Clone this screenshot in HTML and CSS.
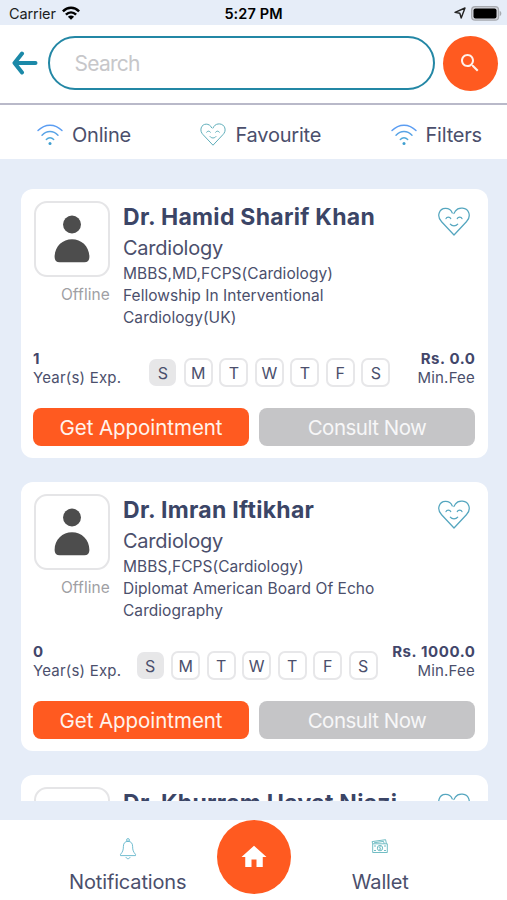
FILE: index.html
```
<!DOCTYPE html>
<html lang="en">
<head>
<meta charset="utf-8">
<title>Doctors</title>
<link rel="stylesheet" href="styles.css">
</head>
<body>
<svg class="defs" aria-hidden="true">
  <symbol id="wifi" viewBox="0 0 26 22">
    <g fill="none" stroke-width="1.4" stroke-linecap="round">
      <path stroke="#5b9df2" d="M1 6.6C8-.6 18-.6 25 6.6"/>
      <path stroke="#57a3e6" d="M5 11.2c4.700-4.900 11.300-4.900 16 0"/>
      <path stroke="#4fa9dc" d="M9.300 15.500c2.200-2.300 5.200-2.300 7.400 0"/>
    </g>
    <circle cx="13" cy="19.500" r="1.500" fill="#3f9fd0"/>
  </symbol>
  <symbol id="heart" viewBox="0 0 32 29">
    <g fill="none" stroke="currentColor" stroke-width="1.250" stroke-linecap="round" stroke-linejoin="round">
      <path d="M14.300 5.900C11.800-.2 3-.1 1.100 6.200c-1 3.500.2 6.300 2.500 8.600L16 28l12.400-13.200c2.300-2.300 3.500-5.100 2.500-8.600C29-.1 20.200-.2 17.300 4.200L15.900 6.500"/>
      <path d="M8 11.600c.7-1.900 3.900-1.900 4.700 0M19.300 11.600c.8-1.900 4-1.900 4.700 0M12.300 17.200c1.800 2.300 5.600 2.300 7.400 0"/>
    </g>
  </symbol>
  <symbol id="person" viewBox="0 0 36 48">
    <circle cx="18" cy="9.500" r="9" fill="#4d4d4d"/>
    <path fill="#4d4d4d" d="M.6 42C.6 31.500 8.500 24.300 18 24.300S35.400 31.500 35.400 42c0 3.500-1.800 5.300-5 5.300H5.600c-3.200 0-5-1.800-5-5.300z"/>
  </symbol>
</svg>

<div class="app">
  <div class="status">
    <div class="carrier">Carrier
      <svg width="18" height="14" viewBox="0 0 18 14"><g fill="none" stroke="#000" stroke-width="2.500"><path d="M.9 5.300c4.700-4.700 11.500-4.700 16.200 0"/><path d="M3.900 8.600c3-2.900 7.200-2.900 10.200 0"/></g><path d="M5.900 10.700c1.800-1.700 4.400-1.700 6.200 0L9 13.800z"/></svg>
    </div>
    <div class="time">5:27 PM</div>
    <div class="power">
      <svg width="12" height="12" viewBox="0 0 12 12"><path fill="none" stroke="#222" stroke-width="1.400" stroke-linejoin="round" d="M11 1 7.200 11 5.800 6.200 1 5.400z"/></svg>
      <svg width="31" height="15" viewBox="0 0 31 15"><rect x=".6" y=".7" width="27" height="13.500" rx="3.500" fill="#d0d3da" stroke="#a7aab0" stroke-width="1.200"/><rect x="2.500" y="2.500" width="23" height="10" rx="2" fill="#000"/><path fill="#a7aab0" d="M28.700 5c2.200.6 2.200 4.400 0 5z"/></svg>
    </div>
  </div>

  <div class="search">
    <svg class="back" width="26" height="24" viewBox="0 0 26 24"><path fill="none" stroke="#1b89a8" stroke-width="4" stroke-linecap="round" stroke-linejoin="round" d="M10 2.500 2.500 12l7.500 9.500M3 12h20.500"/></svg>
    <div class="field">Search</div>
    <div class="go"><svg width="24" height="24" viewBox="0 0 24 24"><path fill="#fff1ea" d="M15.500 14h-.79l-.28-.27C15.410 12.590 16 11.110 16 9.500 16 5.910 13.090 3 9.500 3S3 5.910 3 9.500 5.910 16 9.500 16c1.610 0 3.090-.59 4.230-1.570l.27.28v.79l5 4.990L20.490 19l-4.990-5zm-6 0C7.010 14 5 11.990 5 9.500S7.010 5 9.500 5 14 7.010 14 9.500 11.990 14 9.500 14z"/></svg></div>
  </div>

  <div class="tabs">
    <div class="tab"><svg class="wifi"><use href="#wifi"/></svg><span>Online</span></div>
    <div class="tab"><svg class="heart-sm"><use href="#heart"/></svg><span>Favourite</span></div>
    <div class="tab"><svg class="wifi"><use href="#wifi"/></svg><span>Filters</span></div>
  </div>

  <div class="list">
    <div class="card">
      <div class="top">
        <div class="photo"><div class="avatar"><svg width="36" height="48"><use href="#person"/></svg></div><span class="offline">Offline</span></div>
        <div class="info">
          <div class="name">Dr. Hamid Sharif Khan</div>
          <div class="spec">Cardiology</div>
          <div class="deg">MBBS,MD,FCPS(Cardiology)<br>Fellowship In Interventional<br>Cardiology(UK)</div>
        </div>
        <svg class="heart"><use href="#heart"/></svg>
      </div>
      <div class="stats">
        <div class="stat"><b>1</b><span>Year(s) Exp.</span></div>
        <div class="days"><i class="on">S</i><i>M</i><i>T</i><i>W</i><i>T</i><i>F</i><i>S</i></div>
        <div class="stat right"><b>Rs. 0.0</b><span>Min.Fee</span></div>
      </div>
      <div class="actions"><div class="btn primary">Get Appointment</div><div class="btn muted">Consult Now</div></div>
    </div>

    <div class="card">
      <div class="top">
        <div class="photo"><div class="avatar"><svg width="36" height="48"><use href="#person"/></svg></div><span class="offline">Offline</span></div>
        <div class="info">
          <div class="name">Dr. Imran Iftikhar</div>
          <div class="spec">Cardiology</div>
          <div class="deg">MBBS,FCPS(Cardiology)<br>Diplomat American Board Of Echo<br>Cardiography</div>
        </div>
        <svg class="heart"><use href="#heart"/></svg>
      </div>
      <div class="stats">
        <div class="stat"><b>0</b><span>Year(s) Exp.</span></div>
        <div class="days"><i class="on">S</i><i>M</i><i>T</i><i>W</i><i>T</i><i>F</i><i>S</i></div>
        <div class="stat right"><b>Rs. 1000.0</b><span>Min.Fee</span></div>
      </div>
      <div class="actions"><div class="btn primary">Get Appointment</div><div class="btn muted">Consult Now</div></div>
    </div>

    <div class="card">
      <div class="top">
        <div class="photo"><div class="avatar"><svg width="36" height="48"><use href="#person"/></svg></div></div>
        <div class="info"><div class="name">Dr. Khurram Hayat Niazi</div></div>
        <svg class="heart"><use href="#heart"/></svg>
      </div>
    </div>
  </div>

  <div class="nav">
    <div class="item">
      <svg width="18" height="22" viewBox="0 0 18 22"><g fill="none" stroke="#62b5cb" stroke-width=".9" stroke-linejoin="round"><circle cx="9" cy="2" r="1.400"/><path d="M9 3.300c-3 0-4.600 2.100-4.600 5 0 4-.8 5.600-2.900 8.100v1.200h15v-1.200c-2.100-2.500-2.900-4.100-2.900-8.100 0-2.900-1.600-5-4.600-5zM7 19c.3 2.300 3.700 2.300 4 0"/></g></svg>
      <span>Notifications</span>
    </div>
    <div class="home"><svg width="30" height="30" viewBox="0 0 24 24"><path fill="#fff" d="M10 20v-6h4v6h5v-8h3L12 3 2 12h3v8z"/></svg></div>
    <div class="item">
      <svg width="18" height="22" viewBox="0 0 18 22"><g fill="none" stroke="#62b5bd" stroke-width=".9"><path d="M1.700 5.800h14.600v8.700H1.700zM1.700 5.800l-.6-2.200L14.600 1.700l.8 4M3 4.800l9.500-1.400.7 2.200M3 8h2M3 12.500h2M13 8h2M13 12.500h2"/><circle cx="9" cy="10.100" r="2.700"/><path d="M10.100 9c-2-.9-2.600.7-1.100 1.100s.9 2-1 1.100"/></g></svg>
      <span>Wallet</span>
    </div>
  </div>
</div>
</body>
</html>
```

FILE: styles.css
```
* { box-sizing: border-box; }
body { margin: 0; font-family: Inter, "Liberation Sans", sans-serif; color: #4b4f6c; background: #e6edf8; }
svg { display: block; flex: none; }
.defs { position: absolute; width: 0; height: 0; }
.app { width: 507px; height: 900px; display: flex; flex-direction: column; overflow: hidden; }
.app span, .app b, .name, .spec, .deg, .btn { white-space: nowrap; }

.status { height: 25px; flex: none; display: grid; grid-template-columns: 1fr auto 1fr; align-items: center; padding: 2px 5px 0 9px; font-size: 14.500px; line-height: 22px; color: #1c1d22; }
.carrier { display: flex; align-items: center; gap: 6px; letter-spacing: -.1px; }
.carrier svg { margin-top: -2px; }
.time { font-weight: 600; color: #000; letter-spacing: .1px; margin-left: -4px; }
.power { display: flex; justify-content: flex-end; align-items: center; gap: 5px; }
.power svg { margin-top: -1px; }

.search { height: 80px; flex: none; background: #fff; border-bottom: 2px solid #b9b9c9; display: flex; align-items: center; padding: 0 9px 2px 12px; }
.back { margin-right: 10px; }
.field { width: 387px; height: 54px; border: 2.500px solid #2387a5; border-radius: 27px; padding-left: 24.500px; line-height: 52px; font-size: 21px; color: #c7c7ca; letter-spacing: -.75px; }
.go { width: 55px; height: 55px; margin-left: 8px; border-radius: 50%; background: #ff5a20; display: flex; align-items: center; justify-content: center; }
.go svg { margin-right: 2px; }

.tabs { height: 54px; flex: none; background: #fff; display: flex; justify-content: space-between; align-items: center; padding: 5px 25px 0 37px; font-size: 20px; line-height: 26px; letter-spacing: -.2px; }
.tab { display: flex; align-items: center; }
.wifi { width: 26px; height: 22px; margin-right: 9px; }
.heart-sm { width: 26px; height: 23px; margin-right: 9px; color: #5cacb8; }

.list { height: 642px; flex: none; overflow: hidden; padding: 30px 19.500px 0 20.500px; display: flex; flex-direction: column; gap: 24px; }
.card { height: 269px; flex: none; background: #fff; border-radius: 12px; padding: 12px 12.500px; }
.top { display: flex; height: 142px; }
.photo { width: 77px; margin-right: 13px; }
.avatar { width: 76px; height: 76px; border: 2px solid #e5e5e7; border-radius: 13px; display: flex; align-items: center; justify-content: center; padding-bottom: 1px; margin-left: .5px; }
.offline { display: block; text-align: right; font-size: 15.500px; line-height: 20px; margin-top: 8px; color: #a0a0a4; letter-spacing: .1px; }
.info { flex: 1; padding-top: 1px; }
.name { font-size: 23px; font-weight: 700; line-height: 30px; color: #3b4566; letter-spacing: .27px; }
.spec { font-size: 20px; line-height: 30px; margin-top: 1px; letter-spacing: -.25px; }
.deg { font-size: 15.500px; line-height: 22px; letter-spacing: .05px; }
.heart { width: 32px; height: 29px; margin: 6px 5px 0 0; color: #55a6bf; }
.stats { height: 65px; padding-top: 5px; display: flex; justify-content: space-between; }
.stat { font-size: 15px; line-height: 19px; padding-top: 1px; display: flex; flex-direction: column; letter-spacing: .2px; }
.stat b { color: #42466a; letter-spacing: .6px; }
.right { text-align: right; align-items: flex-end; }
.right b { margin-right: -.6px; }
.days { display: flex; gap: 6.500px; margin-top: 10px; }
.days i { width: 29px; height: 29px; border: 2px solid #e7e7e9; border-radius: 7px; font-style: normal; font-size: 16px; line-height: 26px; text-align: center; }
.days .on { background: #e7e7e8; width: 27px; height: 27px; margin: 1px; line-height: 24px; }
.actions { display: flex; gap: 10px; }
.btn { flex: 1; height: 38px; border-radius: 8px; text-align: center; font-size: 20.500px; line-height: 39px; color: #fff3ec; letter-spacing: -.05px; }
.primary { background: #ff5a20; }
.muted { background: #c5c5c7; color: #f7f7f8; letter-spacing: -.5px; }

.nav { height: 80px; margin-top: 19px; flex: none; background: #fff; display: grid; grid-template-columns: 1fr 74px 1fr; font-size: 20px; line-height: 26px; letter-spacing: -.15px; }
.item { display: flex; flex-direction: column; align-items: center; padding-top: 18px; gap: 9px; }
.item:first-child { padding-left: 39px; }
.item:last-child { padding-right: 37px; }
.home { width: 74px; height: 74px; border-radius: 50%; background: #ff5a20; display: flex; align-items: center; justify-content: center; }
```
